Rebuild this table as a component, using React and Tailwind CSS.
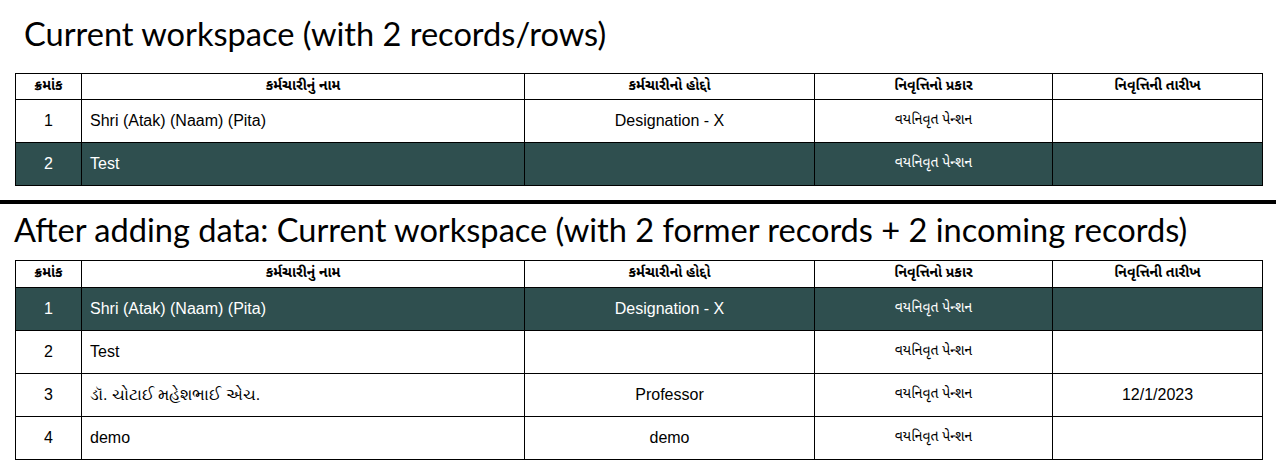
const columns = ['ક્રમાંક', 'કર્મચારીનું નામ', 'કર્મચારીનો હોદ્દો', 'નિવૃત્તિનો પ્રકાર', 'નિવૃત્તિની તારીખ']

const pension = 'વયનિવૃત પેન્શન'

const firstRows = [
  { no: 1, name: 'Shri (Atak) (Naam) (Pita)', post: 'Designation - X', type: pension, date: '' },
  { no: 2, name: 'Test', post: '', type: pension, date: '', dark: true },
]

const secondRows = [
  { no: 1, name: 'Shri (Atak) (Naam) (Pita)', post: 'Designation - X', type: pension, date: '', dark: true },
  { no: 2, name: 'Test', post: '', type: pension, date: '' },
  { no: 3, name: 'ડૉ. ચોટાઈ મહેશભાઈ એચ.', post: 'Professor', type: pension, date: '12/1/2023' },
  { no: 4, name: 'demo', post: 'demo', type: pension, date: '' },
]

const gu = { fontFamily: '"Noto Sans Gujarati", "Noto Sans", "Liberation Sans", sans-serif' }

function RecordsTable({ rows, headH }) {
  return (
    <table className="ml-[15px] w-[1247px] table-fixed border-collapse font-['Liberation_Sans',Arial,sans-serif] text-[16px]">
      <colgroup>
        <col className="w-[66px]" />
        <col className="w-[443px]" />
        <col className="w-[290px]" />
        <col className="w-[238px]" />
        <col className="w-[210px]" />
      </colgroup>
      <thead>
        <tr className={headH}>
          {columns.map((c) => (
            <th key={c} style={gu} className="border border-black p-0 text-center text-[14px] leading-[18px] font-bold text-black">
              {c}
            </th>
          ))}
        </tr>
      </thead>
      <tbody>
        {rows.map((r) => {
          // dark row = highlighted record
          const tone = r.dark ? 'bg-[#2f4f4f] text-white' : 'bg-white text-black'
          return (
            <tr key={r.no} className={`h-[43px] ${tone}`}>
              <td className="border border-black p-0 text-center leading-[18px]">{r.no}</td>
              <td className="border border-black px-[8px] py-0 text-left leading-[18px]">{r.name}</td>
              <td className="border border-black p-0 text-center leading-[18px]">{r.post}</td>
              <td style={gu} className="border border-black p-0 text-center text-[14px] leading-[18px]">{r.type}</td>
              <td className="border border-black p-0 text-center leading-[18px]">{r.date}</td>
            </tr>
          )
        })}
      </tbody>
    </table>
  )
}

export default function App() {
  return (
    <div className="h-[466px] w-[1276px] overflow-hidden bg-white text-black">
      <h1 className="h-[73px] pl-[24px] pt-[14px] font-['Lato',sans-serif] text-[32.6px] leading-[40px] font-normal">
        Current workspace (with 2 records/rows)
      </h1>
      <RecordsTable rows={firstRows} headH="h-[26px]" />
      <div className="mt-[14px] h-[4px] bg-black" />
      <h2 className="h-[56px] pl-[14px] pt-[6px] font-['Lato',sans-serif] text-[32.6px] leading-[40px] font-normal">
        After adding data: Current workspace (with 2 former records + 2 incoming records)
      </h2>
      <RecordsTable rows={secondRows} headH="h-[27px]" />
    </div>
  )
}
